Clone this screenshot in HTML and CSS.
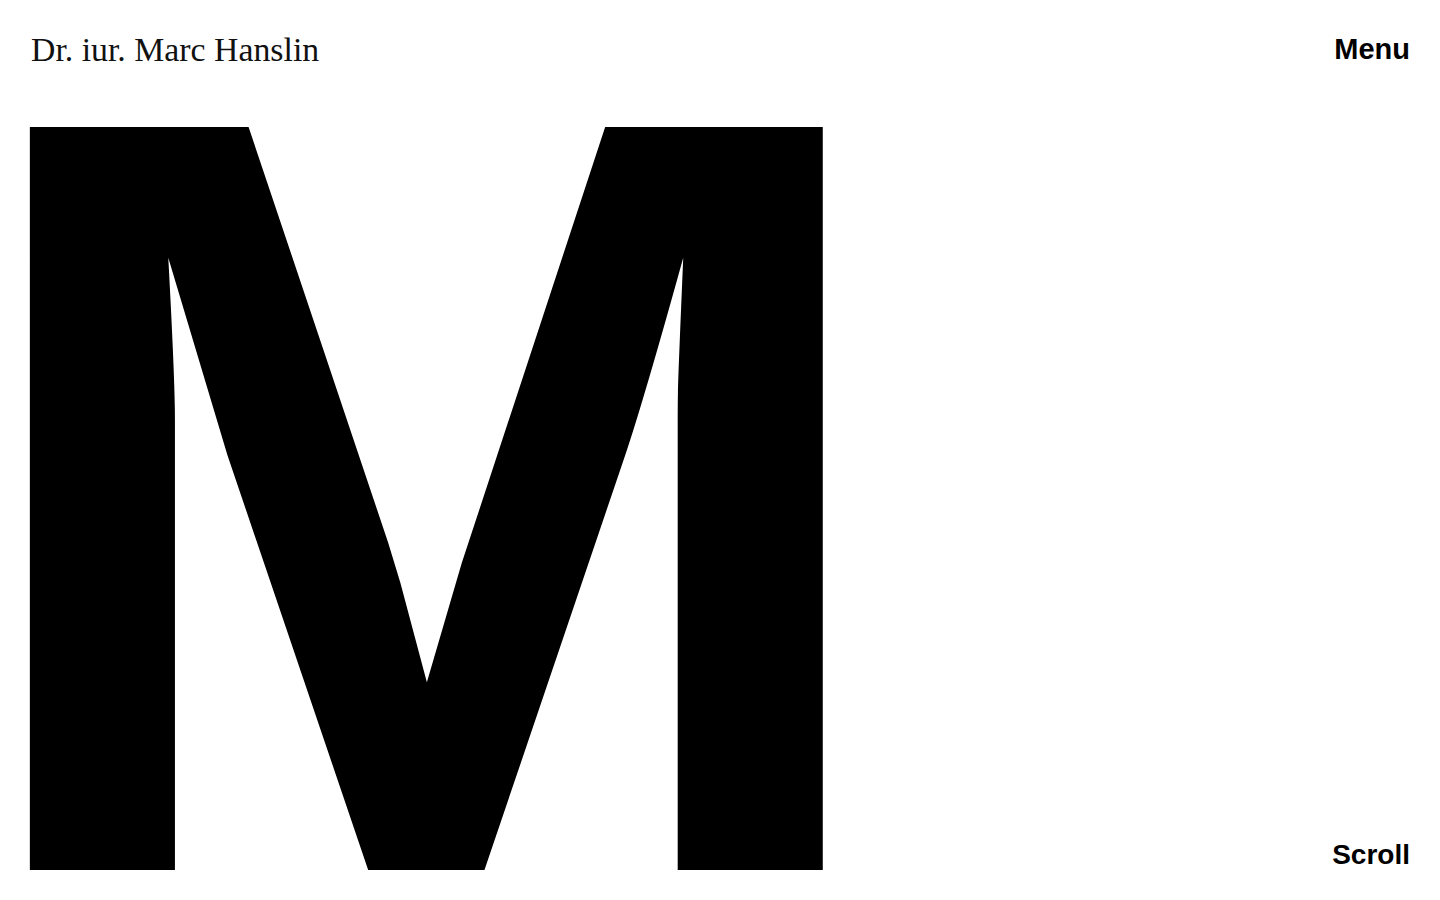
FILE: index.html
```html
<!DOCTYPE html>
<html lang="de">
<head>
<meta charset="utf-8">
<title>Dr. iur. Marc Hanslin</title>
<link rel="stylesheet" href="styles.css">
</head>
<body>
<div class="page">
  <header class="top">
    <a class="name" href="#">Dr. iur. Marc Hanslin</a>
    <a class="menu" href="#">Menu</a>
  </header>
  <main class="hero">
    <h1 class="letter"><span class="glyph">M</span></h1>
    <a class="scroll" href="#">Scroll</a>
  </main>
</div>
</body>
</html>
```
FILE: styles.css
```css
html, body {
  margin: 0;
  padding: 0;
  background: #fff;
  color: #000;
}
body {
  overflow: hidden;
}
a {
  color: inherit;
  text-decoration: none;
}
.page {
  height: 900px;
  box-sizing: border-box;
  display: flex;
  flex-direction: column;
  padding: 0 30px;
  overflow: hidden;
}
.top {
  display: flex;
  justify-content: space-between;
  align-items: flex-start;
  padding-top: 30px;
}
.name {
  font-family: "Liberation Serif", serif;
  font-size: 33.8px;
  line-height: 1.2;
  padding-left: 1px;
  color: #111;
}
.menu {
  font-family: "Liberation Sans", Arial, sans-serif;
  font-weight: 700;
  font-size: 29px;
  line-height: 1.2;
  padding-top: 2px;
}
.hero {
  flex: 1;
  display: flex;
  justify-content: space-between;
  align-items: flex-start;
  margin-top: 20px;
  min-height: 0;
}
.letter {
  margin: 0 0 0 -76px;
  font-family: "Liberation Sans", Arial, sans-serif;
  font-weight: 700;
  font-size: 1080px;
  line-height: 0.75;
  height: 790px;
}
.glyph {
  display: inline-block;
  transform: scaleX(1.05);
  transform-origin: left top;
}
.scroll {
  margin-top: 747px;
  font-family: "Liberation Sans", Arial, sans-serif;
  font-weight: 700;
  font-size: 28px;
  line-height: 1.2;
}
```
